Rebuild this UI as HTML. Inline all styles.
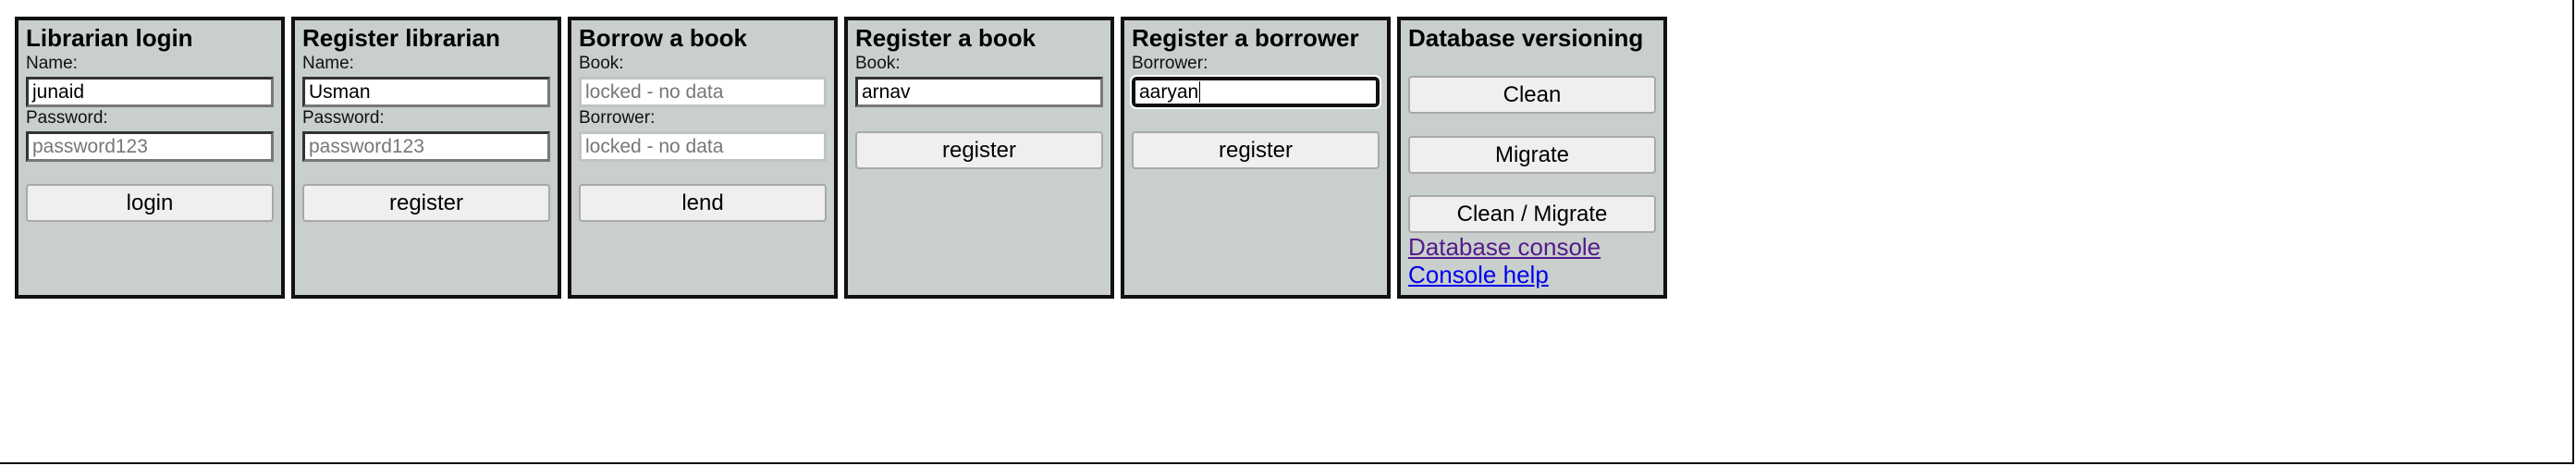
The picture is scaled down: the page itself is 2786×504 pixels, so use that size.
<!DOCTYPE html>
<html><head><meta charset="utf-8"><style>
html,body{margin:0;padding:0;width:2786px;height:504px;overflow:hidden;background:#fff;font-family:"Liberation Sans",Arial,sans-serif;}
.frame{position:absolute;left:0;top:0;width:2782px;height:500px;border-right:2px solid #111;border-bottom:2px solid #111;}
.p{position:absolute;top:18px;width:284px;height:297px;border:4px solid #111;background:#c9cfcc;}
.a{position:absolute;white-space:nowrap;}
.t{font-size:26px;font-weight:bold;color:#000;line-height:30px;}
.l{font-size:19px;color:#111;line-height:22px;}
.in{position:absolute;left:8px;width:258px;height:27px;background:#fff;border:3px solid #333;border-right-color:#777;border-bottom-color:#777;font-size:21px;line-height:27px;padding-left:4px;color:#000;}
.ph{color:#777;}
.dis{border:3px solid #bfc3c1;}
.foc{border:4px solid #111;border-radius:5px;outline:2px solid #fff;height:25px;width:256px;line-height:25px;}
.b{position:absolute;left:8px;width:264px;height:37px;background:#efefef;border:2px solid #a8a8a8;border-radius:4px;font-size:24px;line-height:37px;text-align:center;color:#000;}
.lk{font-size:26px;line-height:30px;text-decoration:underline;}
</style></head><body>
<div class="frame"></div>

<div class="p" style="left:16px">
 <div class="a t" style="left:8px;top:4px">Librarian login</div>
 <div class="a l" style="left:8px;top:36px">Name:</div>
 <div class="in" style="top:61px">junaid</div>
 <div class="a l" style="left:8px;top:95px">Password:</div>
 <div class="in ph" style="top:120px">password123</div>
 <div class="b" style="top:177px">login</div>
</div>

<div class="p" style="left:315px">
 <div class="a t" style="left:8px;top:4px">Register librarian</div>
 <div class="a l" style="left:8px;top:36px">Name:</div>
 <div class="in" style="top:61px">Usman</div>
 <div class="a l" style="left:8px;top:95px">Password:</div>
 <div class="in ph" style="top:120px">password123</div>
 <div class="b" style="top:177px">register</div>
</div>

<div class="p" style="left:614px">
 <div class="a t" style="left:8px;top:4px">Borrow a book</div>
 <div class="a l" style="left:8px;top:36px">Book:</div>
 <div class="in ph dis" style="top:61px">locked - no data</div>
 <div class="a l" style="left:8px;top:95px">Borrower:</div>
 <div class="in ph dis" style="top:120px">locked - no data</div>
 <div class="b" style="top:177px">lend</div>
</div>

<div class="p" style="left:913px">
 <div class="a t" style="left:8px;top:4px">Register a book</div>
 <div class="a l" style="left:8px;top:36px">Book:</div>
 <div class="in" style="top:61px">arnav</div>
 <div class="b" style="top:120px">register</div>
</div>

<div class="p" style="left:1212px">
 <div class="a t" style="left:8px;top:4px">Register a borrower</div>
 <div class="a l" style="left:8px;top:36px">Borrower:</div>
 <div class="in foc" style="top:61px">aaryan<span style="border-left:1px solid #000;margin-left:1px"></span></div>
 <div class="b" style="top:120px">register</div>
</div>

<div class="p" style="left:1511px">
 <div class="a t" style="left:8px;top:4px">Database versioning</div>
 <div class="b" style="top:60px">Clean</div>
 <div class="b" style="top:125px">Migrate</div>
 <div class="b" style="top:189px">Clean / Migrate</div>
 <div class="a lk" style="left:8px;top:230px;color:#551a8b">Database console</div>
 <div class="a lk" style="left:8px;top:260px;color:#0000ee">Console help</div>
</div>
</body></html>
